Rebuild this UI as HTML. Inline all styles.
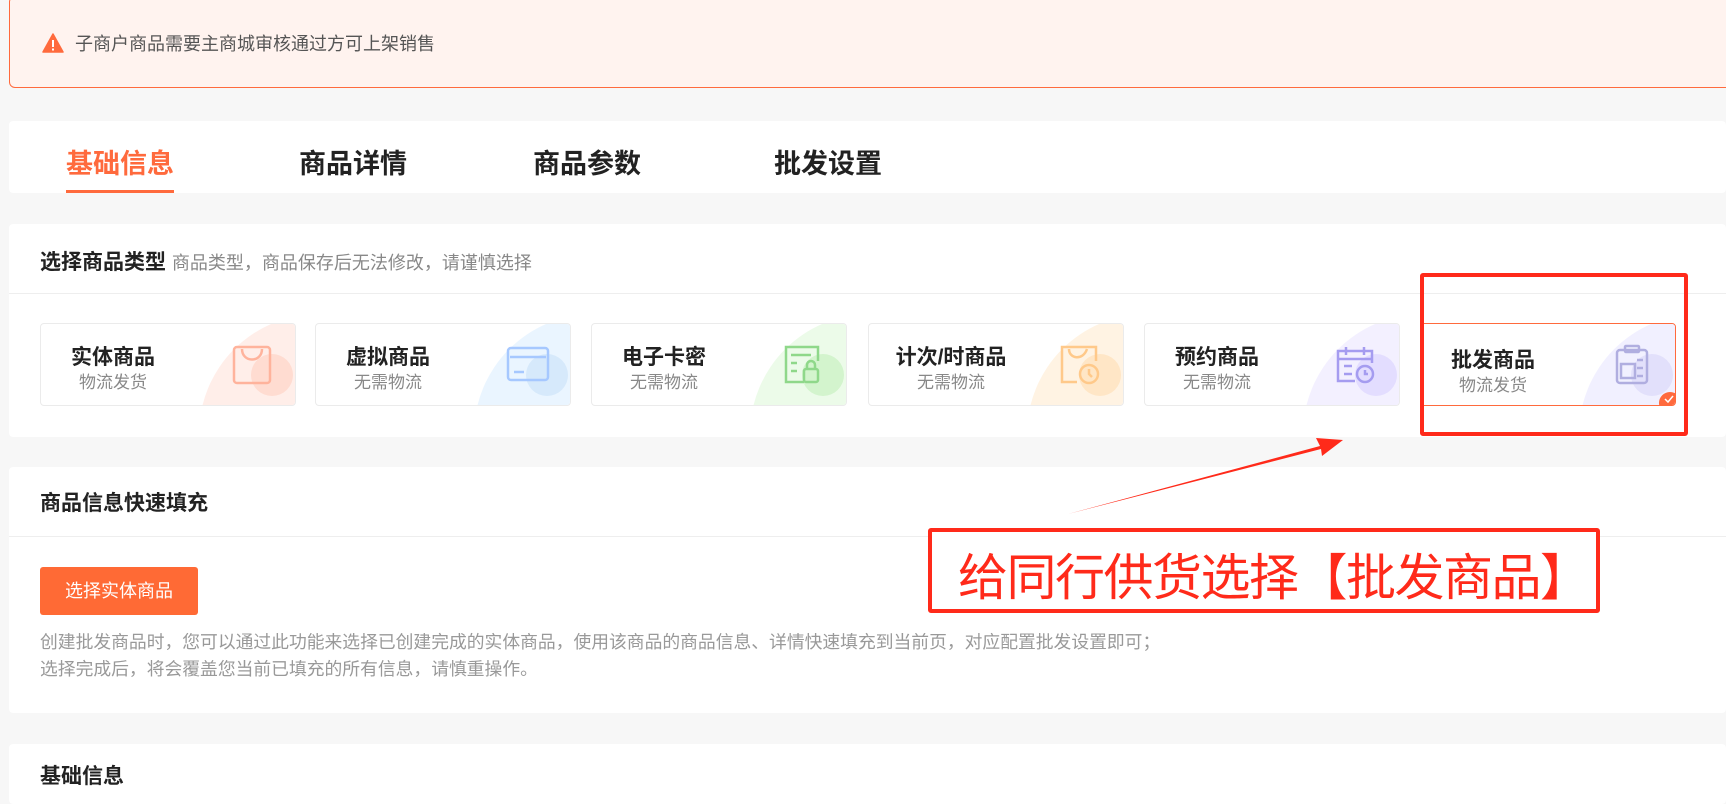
<!DOCTYPE html>
<html><head><meta charset="utf-8"><style>
*{margin:0;padding:0;box-sizing:border-box}
body{width:1726px;height:783px;overflow:hidden;background:#f7f7f7;font-family:"Liberation Sans","Noto Sans CJK SC",sans-serif;position:relative}
.abs{position:absolute}
.warn{left:9px;top:-4px;width:1730px;height:92px;background:#fff3ef;border:1px solid #ff6a3d;border-radius:6px}
.warn span{position:absolute;left:65px;top:33px;font-size:18px;color:#555}
.card{position:absolute;left:9px;width:1717px;background:#fff;border-radius:4px}
.tab{position:absolute;top:144px;font-size:27px;font-weight:bold;color:#222}
.t{position:absolute;width:256px;height:83px;top:323px;border:1px solid #ebebeb;border-radius:4px;overflow:hidden;background:#fff}
.t .bg{position:absolute;left:158px;top:-10px;width:240px;height:240px;border-radius:50%}
.t .dot{position:absolute;left:210px;top:30px;width:42px;height:42px;border-radius:50%}
.t svg{position:absolute;left:190px;top:20px}
.t .tt{position:absolute;left:22px;top:17px;width:100px;text-align:center;font-size:21px;font-weight:bold;color:#222}
.t .ss{position:absolute;left:22px;top:44px;width:100px;text-align:center;font-size:17px;color:#888}
</style></head><body>
<div class="abs warn">
<svg class="abs" style="left:32px;top:36px" width="22" height="20" viewBox="0 0 22 20"><path d="M11 1L21 19H1Z" fill="#ff6a3d" stroke="#ff6a3d" stroke-linejoin="round" stroke-width="1.5"/><rect x="10" y="7" width="2" height="7" fill="#fff"/><rect x="10" y="15.5" width="2" height="2" fill="#fff"/></svg>
<span>子商户商品需要主商城审核通过方可上架销售</span></div>

<div class="card" style="top:121px;height:72px">
<div class="tab" style="left:57px;top:21px;color:#ff6a3d">基础信息</div>
<div class="abs" style="left:57px;top:69px;width:108px;height:3px;background:#ff6a3d"></div>
<div class="tab" style="left:290px;top:21px">商品详情</div>
<div class="tab" style="left:524px;top:21px">商品参数</div>
<div class="tab" style="left:765px;top:21px">批发设置</div>
</div>

<div class="card" style="top:224px;height:213px">
<div class="abs" style="left:31px;top:22px;font-size:21px;font-weight:bold;color:#222">选择商品类型 <span style="font-size:18px;font-weight:normal;color:#888">商品类型，商品保存后无法修改，请谨慎选择</span></div>
<div class="abs" style="left:0;top:69px;width:100%;height:1px;background:#eee"></div>
</div>

<div class="t" style="left:40px"><div class="bg" style="background:#ffeee9"></div><div class="dot" style="background:#ffdcd1"></div>
<svg width="42" height="42" viewBox="0 0 42 42" fill="none" stroke="#ffb39c" stroke-width="2.5"><rect x="3" y="3" width="36" height="36" rx="3"/><path d="M11 5c0 14 20 14 20 0"/></svg>
<div class="tt">实体商品</div><div class="ss">物流发货</div></div>

<div class="t" style="left:315px"><div class="bg" style="background:#eaf5ff"></div><div class="dot" style="background:#d6e9fb"></div>
<svg width="44" height="40" viewBox="0 0 44 40" fill="none" stroke="#a6c8ff" stroke-width="2.5"><rect x="2" y="4" width="40" height="32" rx="3"/><path d="M4 13h36M8 28h10"/></svg>
<div class="tt">虚拟商品</div><div class="ss">无需物流</div></div>

<div class="t" style="left:591px"><div class="bg" style="background:#ecfbe9"></div><div class="dot" style="background:#d3f4cd"></div>
<svg width="42" height="42" viewBox="0 0 42 42" fill="none" stroke="#8fd88a" stroke-width="2.5"><path d="M22 38H4V3h32v14"/><path d="M9 11h20M9 19h6M9 27h6"/><rect x="22" y="25" width="14" height="13" rx="2"/><path d="M25 25v-4a4 4 0 018 0v4"/></svg>
<div class="tt">电子卡密</div><div class="ss">无需物流</div></div>

<div class="t" style="left:868px"><div class="bg" style="background:#fff3e3"></div><div class="dot" style="background:#ffe6c6"></div>
<svg width="42" height="42" viewBox="0 0 42 42" fill="none" stroke="#ffc98a" stroke-width="2.5"><path d="M18 38H3V3h34v14"/><path d="M10 5c0 10 14 12 18 0"/><circle cx="30" cy="30" r="9"/><path d="M30 25v5l3 3"/></svg>
<div class="tt" style="width:120px;left:22px">计次/时商品</div><div class="ss" style="left:32px">无需物流</div></div>

<div class="t" style="left:1144px"><div class="bg" style="background:#f3f0ff"></div><div class="dot" style="background:#e3ddff"></div>
<svg width="42" height="42" viewBox="0 0 42 42" fill="none" stroke="#a59cf0" stroke-width="2.5"><path d="M20 37H3V7h34v12M3 15h34M11 3v8M29 3v8M9 22h8M9 30h8"/><circle cx="30" cy="30" r="8"/><path d="M30 26v4h3"/></svg>
<div class="tt">预约商品</div><div class="ss">无需物流</div></div>

<div class="t" style="left:1420px;border-color:#ff6a3d"><div class="bg" style="background:#f1f0ff"></div><div class="dot" style="background:#e2e0fb"></div>
<svg width="42" height="42" viewBox="0 0 42 42" fill="none" stroke="#b0aee0" stroke-width="2.5"><rect x="6" y="6" width="30" height="33" rx="3"/><rect x="14" y="2" width="14" height="6" rx="1"/><rect x="10" y="20" width="14" height="14"/><path d="M26 16h6M26 24h6M26 32h6"/></svg>
<div class="tt" style="top:20px">批发商品</div><div class="ss" style="top:47px">物流发货</div>
<div class="abs" style="left:238px;top:68px;width:22px;height:22px;border-radius:50%;background:#ff6a3d"></div>
<svg class="abs" style="left:242px;top:70px" width="12" height="10" viewBox="0 0 12 10"><path d="M2 5l3 3 5-6" fill="none" stroke="#fff" stroke-width="1.5"/></svg>
</div>
<div class="abs" style="left:1420px;top:273px;width:268px;height:163px;border:4px solid #ff2a1a;border-radius:3px"></div>

<div class="card" style="top:467px;height:246px">
<div class="abs" style="left:31px;top:20px;font-size:21px;font-weight:bold;color:#222">商品信息快速填充</div>
<div class="abs" style="left:0;top:69px;width:100%;height:1px;background:#eee"></div>
<div class="abs" style="left:31px;top:100px;width:158px;height:48px;background:#ff6a35;border-radius:3px;color:#fff;font-size:18px;line-height:48px;text-align:center">选择实体商品</div>
<div class="abs" style="left:31px;top:162px;font-size:17.8px;line-height:27px;color:#999;white-space:nowrap">创建批发商品时，您可以通过此功能来选择已创建完成的实体商品，使用该商品的商品信息、详情快速填充到当前页，对应配置批发设置即可；<br>选择完成后，将会覆盖您当前已填充的所有信息，请慎重操作。</div>
</div>

<div class="card" style="top:744px;height:60px">
<div class="abs" style="left:31px;top:16px;font-size:21px;font-weight:bold;color:#222">基础信息</div></div>

<svg class="abs" style="left:0;top:0" width="1726" height="783"><path d="M1068 514L1320 446L1316 438L1343 440L1322 456L1321 449Z" fill="#ff2a1a"/></svg>
<div class="abs" style="left:928px;top:528px;width:672px;height:85px;border:4px solid #ff2a1a;border-radius:3px;background:#fff"></div>
<div class="abs" style="left:958px;top:538px;font-size:50px;color:#ff2a1a;white-space:nowrap;letter-spacing:-1.5px">给同行供货选择【批发商品】</div>
</body></html>
